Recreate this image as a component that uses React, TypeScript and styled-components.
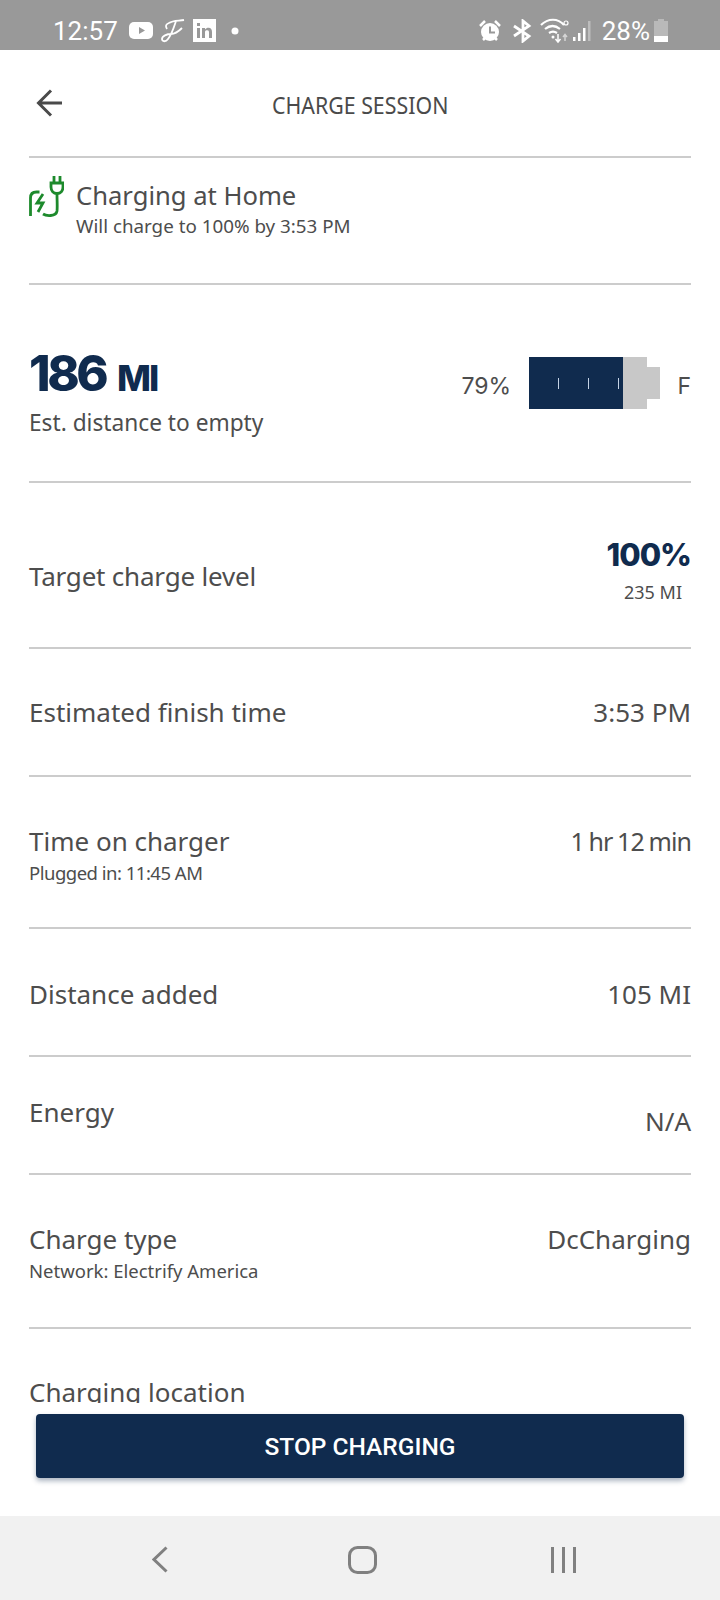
import React from "react";
import styled, { createGlobalStyle } from "styled-components";

const GlobalStyle = createGlobalStyle`
  html, body { margin: 0; padding: 0; background: #fff; }
  body { font-family: "Noto Sans", "Open Sans", sans-serif; color: #4d4d4d; }
`;

const Screen = styled.div`
  width: 720px;
  height: 1600px;
  display: flex;
  flex-direction: column;
  overflow: hidden;
`;

const StatusBar = styled.div`
  height: 50px;
  flex: none;
  box-sizing: border-box;
  background: #999999;
  color: #fff;
  display: flex;
  align-items: center;
  justify-content: space-between;
  padding: 11px 51px 0 53px;
  font-family: Roboto, sans-serif;
  font-size: 26px;
`;

const StatusGroup = styled.div`
  display: flex;
  align-items: center;
`;

const StatusIcon = styled.svg<{ $left?: number }>`
  flex: none;
  margin-left: ${(p) => p.$left ?? 0}px;
`;

const BatteryText = styled.span`
  margin-left: 10px;
`;

const Scroll = styled.div`
  flex: 1;
  min-height: 0;
  overflow: hidden;
  padding: 0 29px;
`;

const Header = styled.header`
  height: 108px;
  display: flex;
  align-items: center;
  justify-content: center;
  position: relative;
  border-bottom: 2px solid #cccccc;
  box-sizing: border-box;
  padding-top: 3px;
`;

const BackButton = styled.div`
  position: absolute;
  left: 7px;
  top: 39px;
  line-height: 0;
`;

const Title = styled.h1`
  margin: 0;
  font-family: "Noto Sans", sans-serif;
  font-weight: 400;
  font-size: 24px;
  color: #4a4a4a;
  transform: scaleX(0.89);
`;

const Section = styled.section<{ $height: number; $align?: string }>`
  height: ${(p) => p.$height}px;
  box-sizing: border-box;
  border-bottom: 2px solid #cccccc;
  display: flex;
  justify-content: space-between;
  align-items: ${(p) => p.$align ?? "center"};
`;

const ChargingRow = styled.div`
  display: flex;
  align-items: flex-start;
  gap: 12px;
  padding-top: 21px;
`;

const PlugIcon = styled.svg`
  flex: none;
  margin-top: -4px;
`;

const ChargingTitle = styled.div`
  font-size: 25.6px;
  line-height: 34px;
`;

const ChargingSub = styled.div`
  font-size: 18.8px;
  line-height: 24px;
  margin-top: 1px;
`;

const Range = styled.div`
  padding-top: 62px;
`;

const RangeValue = styled.div`
  color: #102b4e;
  font-family: Inter, sans-serif;
  font-weight: 800;
  font-size: 49px;
  line-height: 54px;
  letter-spacing: -3.5px;
`;

const RangeUnit = styled.span`
  font-size: 36px;
  letter-spacing: -2px;
  margin-left: 12px;
`;

const RangeLabel = styled.div`
  font-size: 22.7px;
  line-height: 30px;
  margin-top: 3px;
`;

const BatteryRow = styled.div`
  display: flex;
  align-items: center;
  padding-top: 72px;
  align-self: flex-start;
  font-family: Inter, sans-serif;
  font-size: 23px;
`;

const BatteryPct = styled.span`
  width: 68px;
  padding-top: 5px;
`;

const BatteryBody = styled.div`
  width: 118px;
  height: 52px;
  background: #c8c8c8;
`;

const BatteryFill = styled.div`
  height: 100%;
  background: #102b4e;
  display: flex;
  align-items: center;
  justify-content: flex-end;
  gap: 29px;
  padding-right: 4px;
  box-sizing: border-box;
`;

const Tick = styled.i`
  width: 1px;
  height: 11px;
  background: #c6d4e6;
`;

const BatteryCap = styled.div`
  width: 13px;
  height: 32px;
  background: #c8c8c8;
`;

const FullMark = styled.span`
  margin-left: 17px;
  padding-top: 5px;
`;

const Label = styled.div`
  font-size: 26px;
  line-height: 34px;
`;

const TargetLabel = styled(Label)`
  margin-top: 12px;
  letter-spacing: -0.2px;
`;

const SubLabel = styled.div<{ $tight?: boolean }>`
  font-size: 18.5px;
  line-height: 24px;
  margin-top: 3px;
  letter-spacing: ${(p) => (p.$tight ? "-0.5px" : "0")};
`;

const Value = styled.div`
  font-size: 26px;
  line-height: 34px;
  text-align: right;
`;

const TightValue = styled(Value)`
  font-size: 25px;
  letter-spacing: -0.9px;
  word-spacing: -1px;
`;

const LowValue = styled(Value)`
  margin-top: 18px;
`;

const Stack = styled.div`
  display: flex;
  flex-direction: column;
`;

const TargetValue = styled.div`
  display: flex;
  flex-direction: column;
  align-items: flex-end;
`;

const TargetPct = styled.div`
  color: #102b4e;
  font-family: Inter, sans-serif;
  font-weight: 800;
  font-size: 31px;
  line-height: 40px;
  letter-spacing: -1px;
`;

const TargetSub = styled.div`
  font-size: 18px;
  line-height: 26px;
  margin: 4px 9px 0 0;
`;

const TargetRow = styled(Section)`
  padding-top: 9px;
`;

const TopRow = styled(Section)`
  padding-top: 47px;
`;

const DistanceRow = styled(Section)`
  padding-top: 3px;
`;

const EnergyRow = styled(Section)`
  padding-bottom: 6px;
`;

const LastRow = styled.div`
  padding-top: 46px;
`;

const Footer = styled.div`
  height: 113px;
  flex: none;
  padding: 11px 36px 0;
  box-sizing: border-box;
  background: #fff;
`;

const StopButton = styled.button`
  display: block;
  width: 100%;
  height: 64px;
  border: 0;
  border-radius: 4px;
  background: #102b4e;
  color: #fff;
  font-family: Roboto, sans-serif;
  font-weight: 500;
  font-size: 24.5px;
  box-shadow: 0 3px 5px rgba(16, 43, 78, 0.35);
`;

const NavBar = styled.nav`
  height: 84px;
  flex: none;
  box-sizing: border-box;
  background: #f1f1f1;
  display: flex;
  align-items: center;
  justify-content: space-between;
  padding: 3px 144px 0 152px;
`;

export default function App() {
  return (
    <Screen>
      <GlobalStyle />
      <StatusBar>
        <StatusGroup>
          <span>12:57</span>
          <StatusIcon $left={11} width="24" height="17" viewBox="0 0 24 17">
            <rect width="24" height="17" rx="5" fill="#fff" />
            <path d="M10 5l6 3.500-6 3.500z" fill="#999" />
          </StatusIcon>
          <StatusIcon $left={7} width="25" height="26" viewBox="0 0 25 26" fill="none" stroke="#fff" strokeWidth="1.800">
            <path d="M9 5c4-3 10-2 15-3M16 3C14 9 12 16 8 21c-2 3-6 3-6 0 0-3 5-5 9-5 3 0 8-3 11-6M7 11C5 8 6 6 9 5" />
          </StatusIcon>
          <StatusIcon $left={8} width="23" height="23" viewBox="0 0 23 23">
            <rect width="23" height="23" fill="#fff" />
            <path d="M4 9h3v10H4zM4 4h3v3H4zM9 9h3v1.500c1-1.300 2-1.800 3.500-1.800 2.500 0 3.500 1.600 3.500 4.300v6h-3v-5.500c0-1.500-.5-2.300-1.700-2.300S12 11.500 12 13v6H9z" fill="#999" />
          </StatusIcon>
          <StatusIcon $left={15} width="8" height="8" viewBox="0 0 8 8">
            <circle cx="4" cy="4" r="3.500" fill="#fff" />
          </StatusIcon>
        </StatusGroup>
        <StatusGroup>
          <StatusIcon width="24" height="24" viewBox="0 0 24 24">
            <circle cx="12" cy="13" r="9" fill="#fff" />
            <path d="M12 7.500V13.500h5" stroke="#999" strokeWidth="2" fill="none" />
            <path d="M2 7l5-5M22 7l-5-5M5 21l2-2M19 21l-2-2" stroke="#fff" strokeWidth="2.500" />
          </StatusIcon>
          <StatusIcon $left={10} width="20" height="24" viewBox="0 0 20 24" fill="none" stroke="#fff" strokeWidth="2.800">
            <path d="M2 7l15 10-6 5V2l6 5L2 17" />
          </StatusIcon>
          <StatusIcon $left={8} width="32" height="28" viewBox="0 0 32 28" fill="none" stroke="#fff" strokeWidth="2.200">
            <path d="M1 8c7-7 17-7 23 0M5 12c5-4 10-4 15 0M9 16c3-2 5-2 8 0" />
            <circle cx="13" cy="20" r="1.500" fill="#fff" stroke="none" />
            <path d="M18 17v7M15.500 22l2.500 3 2.500-3" strokeWidth="1.500" />
            <path d="M25 24v-6M23 20l2-2.500 2 2.500" strokeWidth="1.500" stroke="#d5d5d5" />
            <circle cx="26" cy="6" r="2" strokeWidth="1.200" />
          </StatusIcon>
          <StatusIcon $left={1} width="19" height="22" viewBox="0 0 19 22">
            <rect x="0" y="17" width="2.500" height="4" fill="#fff" />
            <rect x="5" y="13" width="2.500" height="8" fill="#fff" />
            <rect x="10" y="8" width="2.500" height="13" fill="#fff" />
            <rect x="15" y="1" width="2.500" height="20" fill="#bdbdbd" />
          </StatusIcon>
          <BatteryText>28%</BatteryText>
          <StatusIcon $left={3} width="16" height="23" viewBox="0 0 16 23">
            <path d="M5 0h6v2h4v21H1V2h4z" fill="#b9b9b9" />
            <rect x="1" y="17" width="14" height="6" fill="#fff" />
          </StatusIcon>
        </StatusGroup>
      </StatusBar>
      <Scroll>
        <Header>
          <BackButton>
            <svg width="26" height="28" viewBox="0 0 26 28" fill="none" stroke="#4a4a4a" strokeWidth="3">
              <path d="M26 14H3M15 1.500L2.500 14 15 26.500" />
            </svg>
          </BackButton>
          <Title>CHARGE SESSION</Title>
        </Header>
        <Section $height={127} $align="flex-start">
          <ChargingRow>
            <PlugIcon width="35" height="42" viewBox="0 0 35 42" fill="none" stroke="#1d8a2c" strokeWidth="2.800">
              <path d="M1.500 41V23c0-4 2-6 6-6h3" />
              <path d="M14 19l-6 9h6l-5 9" />
              <path d="M14 39c3 2 13 3 14-3 .5-4 0-10 0-17" />
              <path d="M22 8h12v4c0 4-2.500 6.500-6 6.500S22 16 22 12z" />
              <path d="M25 1v7M31 1v7" />
            </PlugIcon>
            <div>
              <ChargingTitle>Charging at Home</ChargingTitle>
              <ChargingSub>Will charge to 100% by 3:53 PM</ChargingSub>
            </div>
          </ChargingRow>
        </Section>
        <Section $height={198} $align="flex-start">
          <Range>
            <RangeValue>
              186<RangeUnit>MI</RangeUnit>
            </RangeValue>
            <RangeLabel>Est. distance to empty</RangeLabel>
          </Range>
          <BatteryRow>
            <BatteryPct>79%</BatteryPct>
            <BatteryBody>
              <BatteryFill style={{ width: `${(79 / 100) * 118}px` }}>
                <Tick />
                <Tick />
                <Tick />
              </BatteryFill>
            </BatteryBody>
            <BatteryCap />
            <FullMark>F</FullMark>
          </BatteryRow>
        </Section>
        <TargetRow $height={166}>
          <TargetLabel>Target charge level</TargetLabel>
          <TargetValue>
            <TargetPct>100%</TargetPct>
            <TargetSub>235 MI</TargetSub>
          </TargetValue>
        </TargetRow>
        <Section $height={128}>
          <Label>Estimated finish time</Label>
          <Value>3:53 PM</Value>
        </Section>
        <TopRow $height={152} $align="flex-start">
          <Stack>
            <Label>Time on charger</Label>
            <SubLabel $tight>Plugged in: 11:45 AM</SubLabel>
          </Stack>
          <TightValue>1 hr 12 min</TightValue>
        </TopRow>
        <DistanceRow $height={128}>
          <Label>Distance added</Label>
          <Value>105 MI</Value>
        </DistanceRow>
        <EnergyRow $height={118}>
          <Label>Energy</Label>
          <LowValue>N/A</LowValue>
        </EnergyRow>
        <TopRow $height={154} $align="flex-start">
          <Stack>
            <Label>Charge type</Label>
            <SubLabel>Network: Electrify America</SubLabel>
          </Stack>
          <Value>DcCharging</Value>
        </TopRow>
        <LastRow>
          <Label>Charging location</Label>
        </LastRow>
      </Scroll>
      <Footer>
        <StopButton>STOP CHARGING</StopButton>
      </Footer>
      <NavBar>
        <svg width="16" height="27" viewBox="0 0 16 27" fill="none" stroke="#808080" strokeWidth="3">
          <path d="M14.500 1.500L2 13.500l12.500 12" />
        </svg>
        <StatusIcon $left={5} width="29" height="28" viewBox="0 0 29 28" fill="none" stroke="#808080" strokeWidth="3">
          <rect x="1.500" y="1.500" width="26" height="25" rx="8" />
        </StatusIcon>
        <svg width="25" height="26" viewBox="0 0 25 26" stroke="#808080" strokeWidth="3">
          <path d="M1.500 0v26M12.500 0v26M23.500 0v26" />
        </svg>
      </NavBar>
    </Screen>
  );
}
